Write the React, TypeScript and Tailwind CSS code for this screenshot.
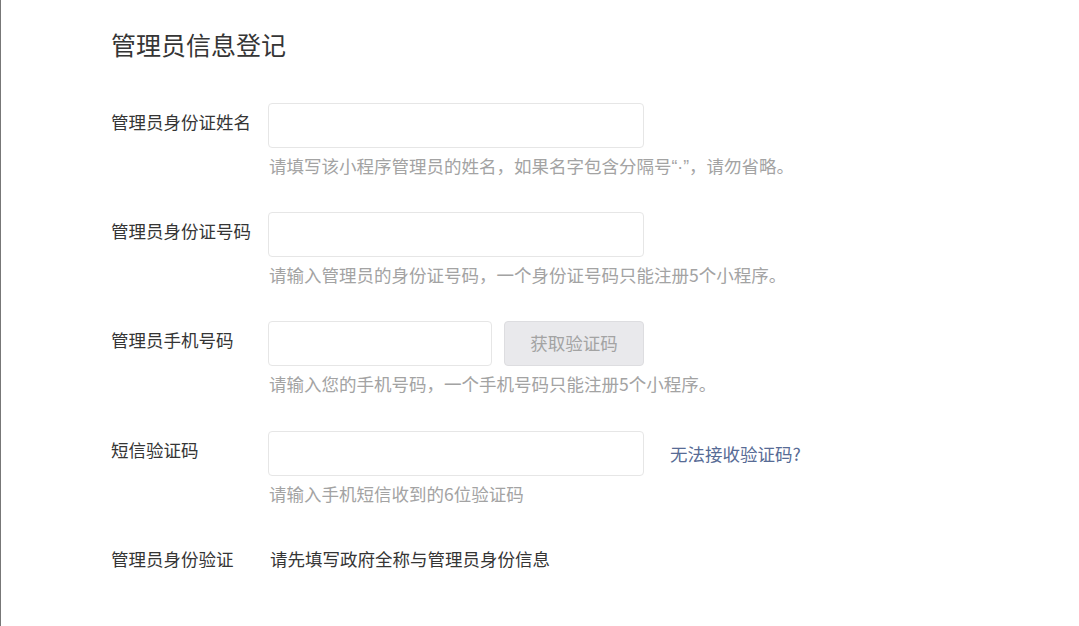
import React from "react";

const font = { fontFamily: '"Noto Sans CJK SC", "Noto Sans", sans-serif' };

function Row({
  label,
  children,
  hint,
  className = "",
}: {
  label: string;
  children: React.ReactNode;
  hint?: React.ReactNode;
  className?: string;
}) {
  return (
    <div className={`flex ${className}`}>
      <div className="w-[157px] h-[45px] flex items-center -mt-[3px] text-[17.5px] text-[#353535] shrink-0">
        {label}
      </div>
      <div className="flex flex-col">
        <div className="flex items-center h-[45px]">{children}</div>
        {hint && (
          <div className="mt-[6px] h-[24px] leading-[24px] text-[17.5px] text-[#a3a3a3] pl-[1px]">{hint}</div>
        )}
      </div>
    </div>
  );
}

export default function App() {
  return (
    <div className="w-[1079px] h-[626px] bg-white border-l border-[#777777] overflow-hidden" style={font}>
      <div className="pl-[110px] pt-[27px]">
        <h1 className="text-[25px] leading-[34px] text-[#353535] font-normal">管理员信息登记</h1>
        <div className="mt-[42px] flex flex-col">
          <Row
            label="管理员身份证姓名"
            hint={
              <>
                请填写该小程序管理员的姓名，如果名字包含分隔号
                <span className="font-['Liberation_Sans',sans-serif]">“·”</span>
                ，请勿省略。
              </>
            }
          >
            <input className="w-[376px] h-[45px] border border-[#e6e6e6] rounded-[4px] bg-white outline-none" />
          </Row>
          <Row
            className="mt-[34px]"
            label="管理员身份证号码"
            hint="请输入管理员的身份证号码，一个身份证号码只能注册5个小程序。"
          >
            <input className="w-[376px] h-[45px] border border-[#e6e6e6] rounded-[4px] bg-white outline-none" />
          </Row>
          <Row
            className="mt-[34px]"
            label="管理员手机号码"
            hint="请输入您的手机号码，一个手机号码只能注册5个小程序。"
          >
            <input className="w-[224px] h-[45px] border border-[#e6e6e6] rounded-[4px] bg-white outline-none" />
            <button className="ml-[12px] w-[140px] h-[45px] border border-[#dddde0] rounded-[4px] bg-[#e9e9ec] text-[17.5px] text-[#a3a3a3]">
              获取验证码
            </button>
          </Row>
          <Row className="mt-[35px]" label="短信验证码" hint="请输入手机短信收到的6位验证码">
            <input className="w-[376px] h-[45px] border border-[#e6e6e6] rounded-[4px] bg-white outline-none" />
            <a className="ml-[26px] mt-[2px] text-[17.5px] text-[#576b95] cursor-pointer">无法接收验证码?</a>
          </Row>
          <div className="flex mt-[41px] h-[24px] leading-[24px] text-[17.5px] text-[#353535]">
            <div className="w-[159px] shrink-0">管理员身份验证</div>
            <div>请先填写政府全称与管理员身份信息</div>
          </div>
        </div>
      </div>
    </div>
  );
}
